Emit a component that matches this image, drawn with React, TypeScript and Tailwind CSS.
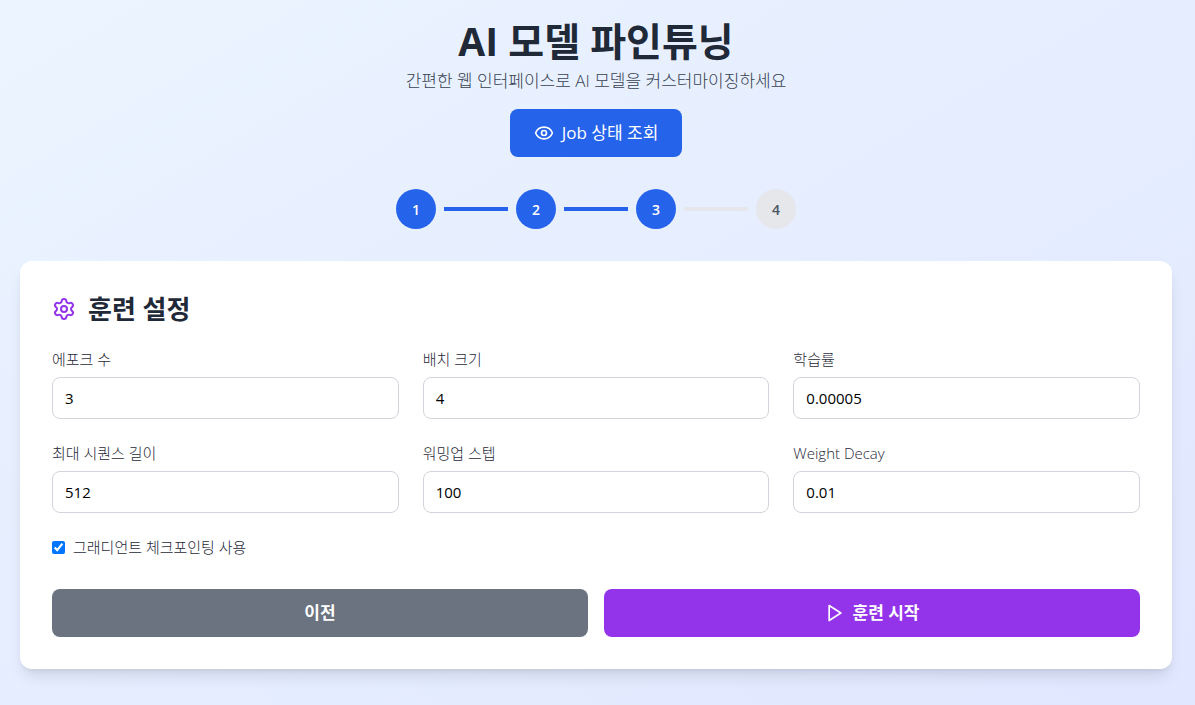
import { useState } from 'react';
import { Eye, Settings } from 'lucide-react';

const steps = [1, 2, 3, 4];
const currentStep = 3;

type Field = { id: string; label: string; value: string };

const fields: Field[] = [
  { id: 'epochs', label: '에포크 수', value: '3' },
  { id: 'batch-size', label: '배치 크기', value: '4' },
  { id: 'learning-rate', label: '학습률', value: '0.00005' },
  { id: 'max-length', label: '최대 시퀀스 길이', value: '512' },
  { id: 'warmup-steps', label: '워밍업 스텝', value: '100' },
  { id: 'weight-decay', label: 'Weight Decay', value: '0.01' },
];

function PlayIcon() {
  return (
    <svg
      width="20"
      height="20"
      viewBox="0 0 24 24"
      fill="none"
      stroke="currentColor"
      strokeWidth="2"
      strokeLinecap="round"
      strokeLinejoin="round"
      aria-hidden="true"
    >
      <polygon points="5 3 19 12 5 21 5 3" />
    </svg>
  );
}

function Stepper() {
  return (
    <div className="mb-8 flex items-center justify-center">
      {steps.map((step) => (
        <div key={step} className="flex items-center">
          <div
            className={`flex h-10 w-10 items-center justify-center rounded-full pt-px text-sm font-semibold ${
              step <= currentStep ? 'bg-[#2563eb] text-white' : 'bg-[#e5e7eb] text-[#4b5563]'
            }`}
          >
            {step}
          </div>
          {step < steps.length && (
            <div className={`mx-2 h-1 w-16 ${step < currentStep ? 'bg-[#2563eb]' : 'bg-[#e5e7eb]'}`} />
          )}
        </div>
      ))}
    </div>
  );
}

function NumberField({ id, label, value }: Field) {
  const [current, setCurrent] = useState(value);
  return (
    <div>
      <label htmlFor={id} className="mb-2 block text-[15px] leading-5 font-light text-[#1f2937]">
        {label}
      </label>
      <input
        id={id}
        type="text"
        inputMode="decimal"
        value={current}
        onChange={(e) => setCurrent(e.target.value)}
        className="block w-full rounded-lg border border-[#d1d5db] bg-white px-3 py-2 text-[15px] leading-6 text-black"
      />
    </div>
  );
}

export default function App() {
  return (
    <div className="min-h-screen bg-linear-to-br/srgb from-[#ebf4ff] to-[#e0e7ff] pt-[21px] pr-[23px] pb-8 pl-5 font-['Open_Sans','Noto_Sans_CJK_KR',sans-serif]">
      <div className="mx-auto max-w-6xl">
        <header className="mb-8 text-center">
          <h1 className="mb-2 text-[39px] leading-10 font-bold text-[#1f2937]">AI 모델 파인튜닝</h1>
          <p className="mb-4 text-[17px] leading-6 font-light text-[#374151]">
            간편한 웹 인터페이스로 AI 모델을 커스터마이징하세요
          </p>
          <button
            type="button"
            className="inline-flex items-center gap-2 rounded-lg bg-[#2563eb] px-6 py-3 text-[17px] leading-6 text-white"
          >
            <Eye size={20} />
            Job 상태 조회
          </button>
        </header>
        <Stepper />
        <main className="rounded-xl bg-white p-8 shadow-lg">
          <h2 className="mb-6 flex items-center gap-3 text-[26px] leading-8 font-bold text-[#1f2937]">
            <Settings size={24} className="text-[#9333ea]" />
            훈련 설정
          </h2>
          <div className="grid grid-cols-3 gap-6">
            {fields.map((field) => (
              <NumberField key={field.id} {...field} />
            ))}
          </div>
          <label className="mt-6 flex items-center gap-2 text-[15px] leading-5 font-light text-[#1f2937]">
            <input type="checkbox" defaultChecked />
            그래디언트 체크포인팅 사용
          </label>
          <div className="mt-8 grid grid-cols-2 gap-4">
            <button
              type="button"
              className="rounded-lg bg-[#6b7280] px-6 py-3 text-[17px] leading-6 font-bold text-white"
            >
              이전
            </button>
            <button
              type="button"
              className="flex items-center justify-center gap-2 rounded-lg bg-[#9333ea] px-6 py-3 text-[17px] leading-6 font-bold text-white"
            >
              <PlayIcon />
              훈련 시작
            </button>
          </div>
        </main>
      </div>
    </div>
  );
}
